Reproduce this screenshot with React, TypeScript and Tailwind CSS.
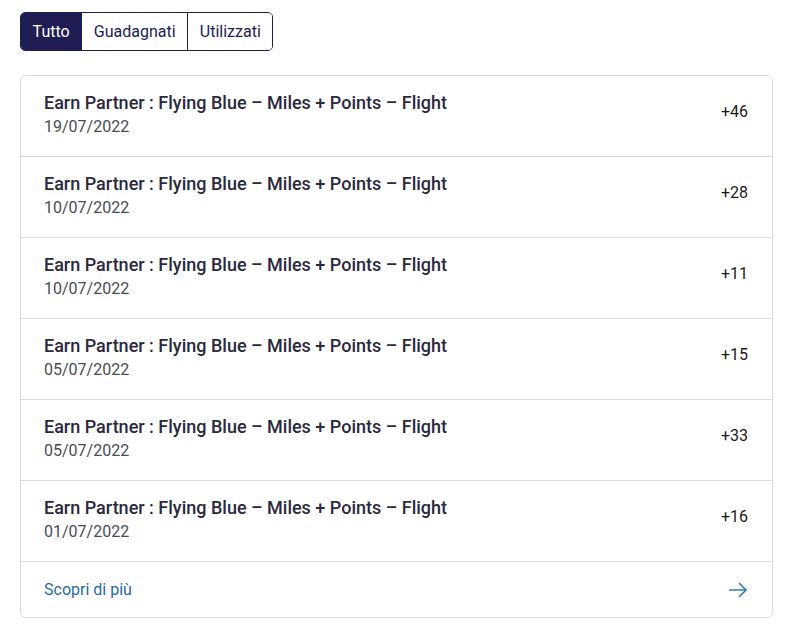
import React from 'react';

const rows = [
  { date: '19/07/2022', points: '+46' },
  { date: '10/07/2022', points: '+28' },
  { date: '10/07/2022', points: '+11' },
  { date: '05/07/2022', points: '+15' },
  { date: '05/07/2022', points: '+33' },
  { date: '01/07/2022', points: '+16' },
];

const tabs = ['Tutto', 'Guadagnati', 'Utilizzati'];

export default function App() {
  return (
    <div className="min-h-screen bg-white px-5 pt-3 font-['Roboto',sans-serif]">
      {/* Filter tabs */}
      <div className="inline-flex h-[39px] overflow-hidden rounded-[5px] border border-[#201c54]">
        {tabs.map((t, i) => (
          <button
            key={t}
            className={`px-[11.6px] text-base leading-none ${
              i === 0 ? 'bg-[#201c54] text-white' : 'bg-white text-[#201c54]'
            } ${i > 0 ? 'border-l border-[#201c54]' : ''}`}
          >
            {t}
          </button>
        ))}
      </div>

      {/* Transactions list */}
      <div className="mt-6 w-[753px] rounded-md border border-[#dcdcdf] bg-white">
        {rows.map((r, i) => (
          <div
            key={i}
            className="flex items-start justify-between border-b border-[#dcdcdf] pl-[23px] pr-6 pt-[15px] pb-[17px]"
          >
            <div>
              <div className="text-lg font-medium leading-6 text-[#2a2940]">
                Earn Partner : Flying Blue – Miles + Points – Flight
              </div>
              <div className="text-base leading-6 text-[#4b4a58]">{r.date}</div>
            </div>
            <div className="mt-[9px] text-base leading-6 text-[#1a1a1a]">{r.points}</div>
          </div>
        ))}
        <div className="flex h-[55px] items-center justify-between pl-[23px] pr-6">
          <span className="text-base text-[#1f6aa5]">Scopri di più</span>
          <svg width="20" height="20" viewBox="0 0 20 20" fill="none" stroke="#2f7bc0" strokeWidth="1.6">
            <path d="M1 10h17M11 3l7 7-7 7" />
          </svg>
        </div>
      </div>
    </div>
  );
}
